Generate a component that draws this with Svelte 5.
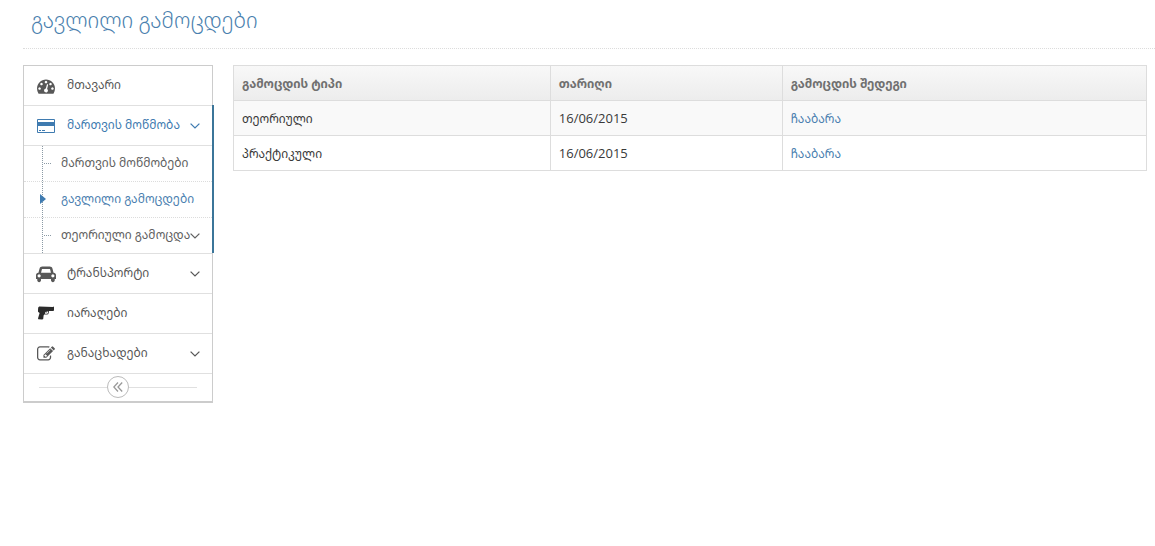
<script>
  const icons = {
    dashboard: {
      box: '0 0 1792 1792', w: 18,
      d: 'M384 1152q0-53-37.5-90.5t-90.5-37.5-90.5 37.5-37.5 90.5 37.5 90.5 90.5 37.5 90.5-37.5 37.5-90.5zm192-448q0-53-37.5-90.5t-90.5-37.5-90.5 37.5-37.5 90.5 37.5 90.5 90.5 37.5 90.5-37.5 37.5-90.5zm428 481l101-382q6-26-7.5-48.5t-38.5-29.5-48 6.5-30 39.5l-101 382q-60 5-107 43.5t-63 98.5q-20 77 20 146t117 89 146-20 89-117q16-60-6-117t-72-91zm660-33q0-53-37.5-90.5t-90.5-37.5-90.5 37.5-37.5 90.5 37.5 90.5 90.5 37.5 90.5-37.5 37.5-90.5zm-640-640q0-53-37.5-90.5t-90.5-37.5-90.5 37.5-37.5 90.5 37.5 90.5 90.5 37.5 90.5-37.5 37.5-90.5zm448 192q0-53-37.5-90.5t-90.5-37.5-90.5 37.5-37.5 90.5 37.5 90.5 90.5 37.5 90.5-37.5 37.5-90.5zm320 448q0 261-141 483-19 29-54 29h-1402q-35 0-54-29-141-221-141-483 0-182 71-348t191-286 286-191 348-71 348 71 286 191 191 286 71 348z'
    },
    card: {
      box: '0 0 18 18', w: 18,
      d: 'M1 2h16a1 1 0 0 1 1 1v12a1 1 0 0 1-1 1h-16a1 1 0 0 1-1-1v-12a1 1 0 0 1 1-1zM1 3v2h16v-2zM1 9v6h16v-6zM2 13h2v1h-2zM5 13h3v1h-3z'
    },
    car: {
      box: '0 0 2048 1792', w: 20,
      d: 'M480 1088q0-66-47-113t-113-47-113 47-47 113 47 113 113 47 113-47 47-113zm36-320h1016l-89-357q-2-8-14-17.5t-21-9.5h-768q-9 0-21 9.5t-14 17.5zm1372 320q0-66-47-113t-113-47-113 47-47 113 47 113 113 47 113-47 47-113zm160-96v384q0 14-9 23t-23 9h-96v128q0 80-56 136t-136 56-136-56-56-136v-128h-1024v128q0 80-56 136t-136 56-136-56-56-136v-128h-96q-14 0-23-9t-9-23v-384q0-93 65.5-158.5t158.5-65.5h28l105-419q23-94 104-157.5t179-63.5h768q98 0 179 63.5t104 157.5l105 419h28q93 0 158.5 65.5t65.5 158.5z'
    },
    gun: {
      box: '0 0 18 18', w: 18,
      d: 'M1.2 2.4L2.2 1.6 15.8 2 16.2 1.4 17 2V5.2L16.4 6H12L11.600 8.200Q11.400 9.600 10 9.600H7.200L6.600 10.600 6.200 14 5.200 14.600 1.300 14.300 1 13.600 2.600 8 1 6.800V5zM8.400 7L7.900 8.800H9.900Q10.700 8.800 10.900 8L11.100 6.500H9.600L9.500 7.800 8.900 7.600 9 6.700z'
    },
    edit: {
      box: '0 0 1792 1792', w: 18,
      d: 'M888 1184l116-116-152-152-116 116v56h96v96h56zm440-720q-16-16-33 1l-350 350q-17 17-1 33t33-1l350-350q17-17 1-33zm80 594v190q0 119-84.5 203.5t-203.5 84.5h-832q-119 0-203.5-84.5t-84.5-203.5v-832q0-119 84.5-203.5t203.5-84.5h832q63 0 117 25 15 7 18 23 3 17-9 29l-49 49q-14 14-32 8-23-6-45-6h-832q-66 0-113 47t-47 113v832q0 66 47 113t113 47h832q66 0 113-47t47-113v-126q0-13 9-22l64-64q15-15 35-7t20 29zm-96-738l288 288-672 672h-288v-288zm444 132l-92 92-288-288 92-92q28-28 68-28t68 28l152 152q28 28 28 68t-28 68z'
    }
  };

  const menu = [
    { label: 'მთავარი', icon: 'dashboard' },
    {
      label: 'მართვის მოწმობა', icon: 'card', open: true, more: true,
      children: [
        { label: 'მართვის მოწმობები' },
        { label: 'გავლილი გამოცდები', active: true },
        { label: 'თეორიული გამოცდა', more: true }
      ]
    },
    { label: 'ტრანსპორტი', icon: 'car', more: true },
    { label: 'იარაღები', icon: 'gun' },
    { label: 'განაცხადები', icon: 'edit', more: true }
  ];

  const exams = [
    { type: 'თეორიული', date: '16/06/2015', result: 'ჩააბარა' },
    { type: 'პრაქტიკული', date: '16/06/2015', result: 'ჩააბარა' }
  ];
</script>

{#snippet chevron()}
  <svg class="chevron" viewBox="0 0 10 6" aria-hidden="true">
    <path d="M0.600 0.600L5 4.900 9.400 0.600" fill="none" stroke="currentColor" stroke-width="1.300" />
  </svg>
{/snippet}

<header><h1>გავლილი გამოცდები</h1></header>

<div class="layout">
  <nav>
    <ul class="menu">
      {#each menu as item}
        <li class:open={item.open}>
          <a class="link" href="#top">
            <span class="icon">
              <svg viewBox={icons[item.icon].box} width={icons[item.icon].w} height="18" class={item.icon} aria-hidden="true">
                <path d={icons[item.icon].d} fill="currentColor" fill-rule="evenodd" />
              </svg>
            </span>
            <span class="label">{item.label}</span>
            {#if item.more}{@render chevron()}{/if}
          </a>
          {#if item.children}
            <ul class="sub">
              {#each item.children as child}
                <li class:active={child.active}>
                  <a href="#top">
                    <span class="label">{child.label}</span>
                    {#if child.more}{@render chevron()}{/if}
                  </a>
                </li>
              {/each}
            </ul>
          {/if}
        </li>
      {/each}
    </ul>
    <div class="collapse">
      <button type="button" aria-label="«">
        <svg viewBox="0 0 10 10" width="10" height="10" aria-hidden="true">
          <path d="M5 0.500L0.800 5 5 9.500M9.200 0.500L5 5 9.200 9.500" fill="none" stroke="currentColor" stroke-width="1.300" />
        </svg>
      </button>
    </div>
  </nav>

  <main>
    <table>
      <colgroup><col class="c1" /><col class="c2" /><col /></colgroup>
      <thead>
        <tr><th>გამოცდის ტიპი</th><th>თარიღი</th><th>გამოცდის შედეგი</th></tr>
      </thead>
      <tbody>
        {#each exams as exam}
          <tr><td>{exam.type}</td><td class="date">{exam.date}</td><td><a href="#top">{exam.result}</a></td></tr>
        {/each}
      </tbody>
    </table>
  </main>
</div>

<style>
  :global(body) {
    background: #fff;
    color: #393939;
    font: 12px/20px "Open Sans", "Noto Sans Georgian", "DejaVu Sans", sans-serif;
  }
  a { color: #4c7fb0; text-decoration: none; }
  ul { list-style: none; margin: 0; padding: 0; }

  header {
    margin: 0 0 16px 23px;
    padding: 4px 8px 12px;
    border-bottom: 1px dotted #dcdcdc;
  }
  h1 {
    margin: 0;
    color: #4a7fae;
    font-size: 21px;
    font-weight: 300;
    line-height: 32px;
  }

  .layout {
    display: flex;
    align-items: flex-start;
    gap: 20px;
    padding: 0 8px 0 23px;
  }
  nav {
    box-sizing: border-box;
    flex: 0 0 190px;
    min-width: 0;
    border: 1px solid #ccc;
    border-bottom-width: 2px;
  }
  .menu > li { border-bottom: 1px solid #e0e0e0; }
  .menu > li.open { position: relative; }
  .open::after {
    content: "";
    position: absolute;
    top: -1px;
    right: -2px;
    bottom: 0;
    width: 2px;
    background: #3b7599;
  }
  .link {
    display: flex;
    align-items: center;
    height: 39px;
    padding: 0 12px 0 11px;
    color: #585858;
  }
  .open > .link { color: #3f7bb0; }
  .icon {
    display: flex;
    justify-content: center;
    width: 22px;
    margin-right: 10px;
  }
  .gun { color: #2b2b2b; }
  .label {
    flex: 1;
    min-width: 0;
    padding-bottom: 1px;
    white-space: nowrap;
  }
  .chevron { flex: none; width: 10px; height: 6px; }

  .sub {
    position: relative;
    border-top: 1px solid #e0e0e0;
  }
  .sub::before {
    content: "";
    position: absolute;
    top: 0;
    bottom: 0;
    left: 18px;
    border-left: 1px dotted #8b9aa5;
  }
  .sub li { position: relative; }
  .sub li + li { border-top: 1px dotted #dcdcdc; }
  .sub li::before {
    content: "";
    position: absolute;
    top: 17px;
    left: 20px;
    width: 7px;
    border-top: 1px dotted #8b9aa5;
  }
  .sub li.active::before {
    top: 12px;
    left: 16px;
    width: 0;
    border: solid transparent;
    border-width: 5px 0 5px 6px;
    border-left-color: #3f7bb0;
  }
  .sub a {
    display: flex;
    align-items: center;
    height: 35px;
    padding: 0 12px 0 37px;
    color: #616161;
  }
  .sub .active a { color: #4c7fb0; }

  .collapse {
    display: flex;
    align-items: center;
    justify-content: center;
    height: 26px;
    padding: 0 15px 1px;
  }
  .collapse::before,
  .collapse::after {
    content: "";
    flex: 1;
    border-top: 1px solid #e0e0e0;
  }
  button {
    display: flex;
    align-items: center;
    justify-content: center;
    box-sizing: border-box;
    width: 22px;
    height: 22px;
    padding: 0;
    border: 1px solid #bbb;
    border-radius: 50%;
    background: #fff;
    color: #999;
  }

  main { flex: 1; min-width: 0; }
  table {
    width: 100%;
    border-collapse: collapse;
    table-layout: fixed;
  }
  .c1 { width: 34.7%; }
  .c2 { width: 25.4%; }
  th, td {
    height: 20px;
    padding: 8px 8px 6px;
    border: 1px solid #ddd;
    text-align: left;
    white-space: nowrap;
  }
  td.date {
    padding: 7px 8px;
    font-size: 13px;
  }
  thead tr { background: linear-gradient(#f8f8f8, #ececec); }
  th { color: #707070; font-weight: 700; }
  tbody tr:nth-child(odd) { background: #f9f9f9; }
</style>
